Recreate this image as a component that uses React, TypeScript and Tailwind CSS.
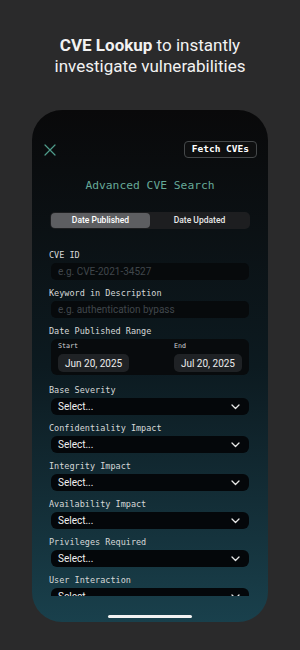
import React from 'react';

const mono = { fontFamily: '"DejaVu Sans Mono", "Liberation Mono", monospace' };
const sans = { fontFamily: 'Roboto, "Noto Sans", Arial, sans-serif' };

const selects = [
  'Base Severity',
  'Confidentiality Impact',
  'Integrity Impact',
  'Availability Impact',
  'Privileges Required',
  'User Interaction',
];

const Label = ({ children }: { children: React.ReactNode }) => (
  <div style={mono} className="px-[17px] text-[8.5px] leading-[12px] text-[#d6d8d8]">
    {children}
  </div>
);

const Chevron = () => (
  <svg width="9" height="6" viewBox="0 0 9 6" fill="none">
    <path d="M1 1l3.5 3.5L8 1" stroke="#e8e8e8" strokeWidth="1.3" strokeLinecap="round" strokeLinejoin="round" />
  </svg>
);

const App = () => {
  return (
    <div className="w-[300px] h-[650px] bg-[#2a2a2b] flex flex-col items-center overflow-hidden">
      {/* Caption */}
      <h1 style={sans} className="pt-[35px] text-center text-[17px] leading-[21px] text-[#f2f2f2]">
        <span className="font-bold">CVE Lookup</span> to instantly
        <br />
        investigate vulnerabilities
      </h1>

      {/* Phone */}
      <div className="relative mt-[33px] w-[236px] h-[512px] rounded-[30px] overflow-hidden bg-linear-to-b from-[#09090a] via-[#0c1a20] to-[#19404c]">
        <div className="flex items-center justify-between pt-[31px] pl-[12px] pr-[11px]">
          <svg width="12" height="12" viewBox="0 0 12 12" fill="none">
            <path d="M1 1l10 10M11 1L1 11" stroke="#4f9c8b" strokeWidth="1.2" strokeLinecap="round" />
          </svg>
          <div
            style={mono}
            className="h-[17px] px-[7px] flex items-center rounded-[4px] border border-[#45484a] bg-[#0e0f10] text-[9.5px] font-bold text-white"
          >
            Fetch CVEs
          </div>
        </div>

        <div style={mono} className="mt-[20px] text-center text-[11.3px] leading-[16px] text-[#66a998]">
          Advanced CVE Search
        </div>

        {/* Segmented control */}
        <div style={sans} className="mt-[18px] mx-[18px] h-[17px] flex rounded-[5px] bg-[#1d1e20] p-[1px] text-[8.5px] font-medium text-white">
          <div className="flex-1 flex items-center justify-center rounded-[4px] bg-[#5d5e61]">Date Published</div>
          <div className="flex-1 flex items-center justify-center text-[#e8e8e8]">Date Updated</div>
        </div>

        {/* Form */}
        <div className="h-[367px] overflow-hidden pt-[20px]">
          <Label>CVE ID</Label>
          <div style={sans} className="mt-[2px] mx-[19px] h-[17px] flex items-center rounded-[5px] bg-[#070a0c] px-[7px] text-[10px] text-[#40464b]">
            e.g. CVE-2021-34527
          </div>

          <div className="mt-[7px]">
            <Label>Keyword in Description</Label>
          </div>
          <div style={sans} className="mt-[2px] mx-[19px] h-[17px] flex items-center rounded-[5px] bg-[#070a0c] px-[7px] text-[10px] text-[#40464b]">
            e.g. authentication bypass
          </div>

          <div className="mt-[7px]">
            <Label>Date Published Range</Label>
          </div>
          <div className="mt-[2px] mx-[19px] h-[36px] rounded-[6px] bg-[#080b0d] px-[7px] pt-[3px] flex justify-between">
            {[
              ['Start', 'Jun 20, 2025'],
              ['End', 'Jul 20, 2025'],
            ].map(([k, v]) => (
              <div key={k} className="flex flex-col">
                <div style={mono} className="text-[6.7px] leading-[9px] text-[#cfd2d3]">{k}</div>
                <div style={sans} className="mt-[3px] h-[18px] px-[7px] flex items-center rounded-[5px] bg-[#1f2225] text-[10px] text-[#ececec]">
                  {v}
                </div>
              </div>
            ))}
          </div>

          {selects.map((s, i) => (
            <div key={s} className={i === 0 ? 'mt-[9px]' : 'mt-[7px]'}>
              <Label>{s}</Label>
              <div style={sans} className="mt-[2px] mx-[19px] h-[17px] flex items-center justify-between rounded-[6px] bg-[#04070a] pl-[7px] pr-[9px] text-[10px] text-[#f0f0f0]">
                <span>Select...</span>
                <Chevron />
              </div>
            </div>
          ))}
        </div>

        {/* Home indicator */}
        <div className="absolute bottom-[4px] left-1/2 -translate-x-1/2 w-[84px] h-[3px] rounded-full bg-[#f2f2f2]" />
      </div>
    </div>
  );
};

export default App;
